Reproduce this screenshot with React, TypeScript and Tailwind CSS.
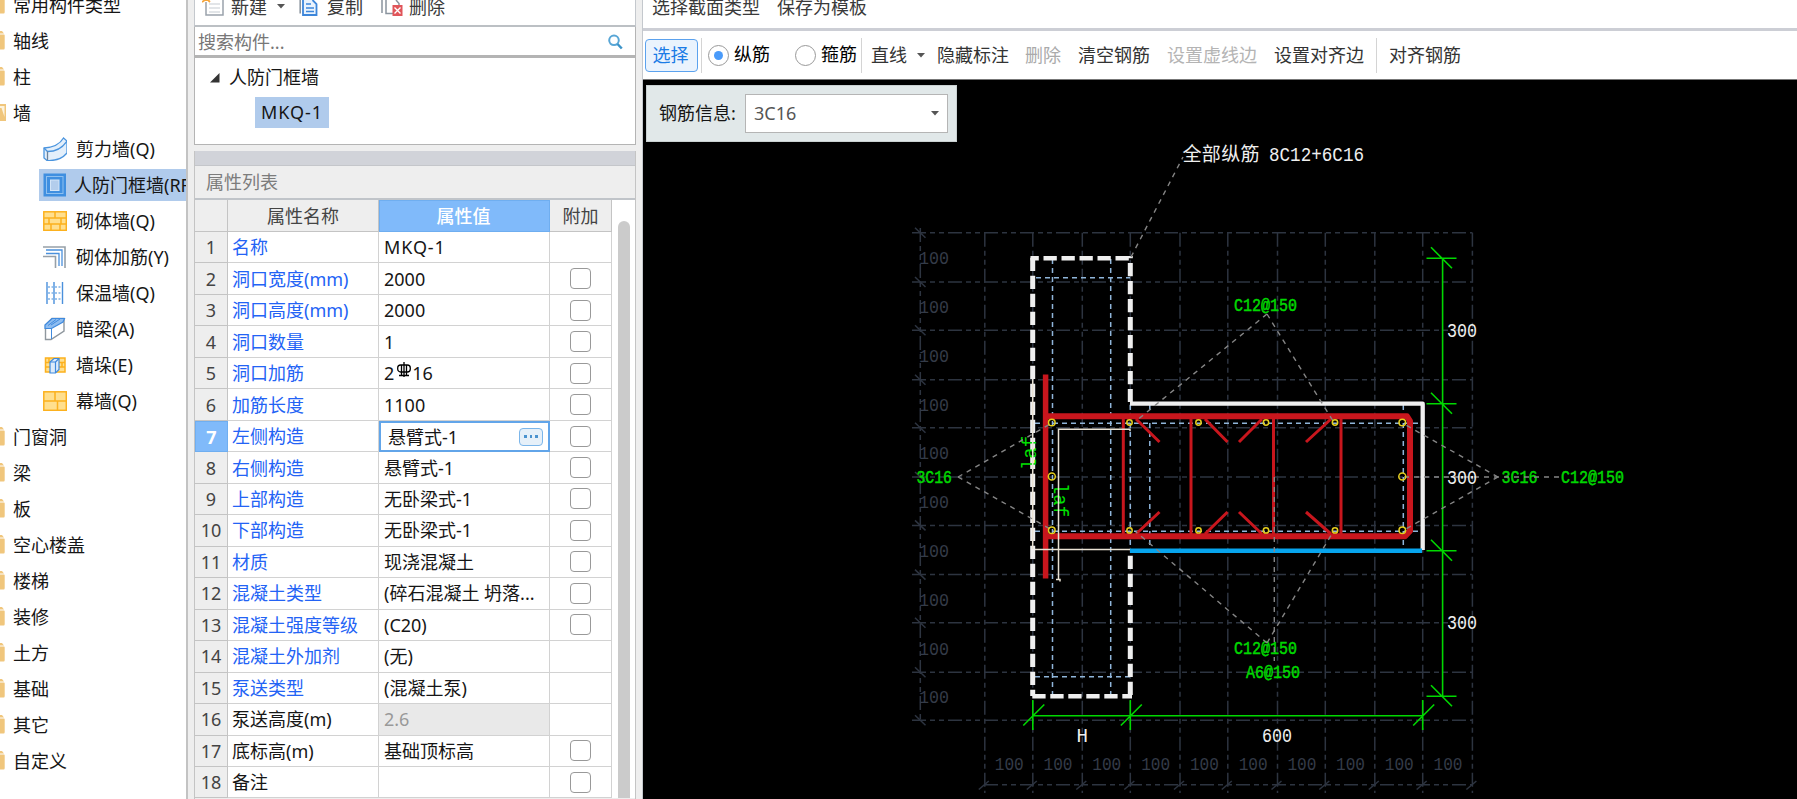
import React from "react";

const UI = "font-['Noto_Sans','Noto_Sans_CJK_SC',sans-serif]";

/* ---------- component tree ---------- */

function IconShear() {
  return (
    <svg width="24" height="24" viewBox="0 0 24 24" fill="none">
      <path d="M1 11C9 10.500 17 7 20.500 1L24 4V16C20 21 13 24 4 23.500L1 21Z" fill="#e3effb" stroke="#4a94de" strokeWidth="1.300" />
      <path d="M1 11L4.500 14.500C13 14.500 20 10 24 4" stroke="#4a94de" strokeWidth="1.300" />
      <path d="M4.500 14.500V23" stroke="#6c8299" strokeWidth="1.300" />
    </svg>
  );
}
function IconFrame() {
  return (
    <svg width="24" height="24" viewBox="0 0 24 24" fill="none">
      <rect x="0.500" y="0.500" width="22.500" height="23" fill="#3f8fe0" />
      <rect x="3.500" y="3.500" width="16.500" height="17" stroke="#8ec0f0" />
      <rect x="7.500" y="7" width="8.500" height="10.500" fill="#b3cdec" stroke="#d3e5f8" />
    </svg>
  );
}
function IconBrick() {
  return (
    <svg width="24" height="20" viewBox="0 0 24 20" fill="none">
      <rect x="0.800" y="0.800" width="22.500" height="18.500" fill="#ffdf8e" stroke="#fcb11e" strokeWidth="1.500" />
      <path d="M1 7H23M1 13H23M12 1V7M6 7V13M18 7V13M8 13V19M17 13V19" stroke="#fcb11e" strokeWidth="1.500" />
    </svg>
  );
}
function IconRebar() {
  return (
    <svg width="24" height="24" viewBox="0 0 24 24" fill="none">
      <path d="M0 2H22V23" stroke="#97a0a8" strokeWidth="1.600" />
      <path d="M0 11.500H12.500V23" stroke="#97a0a8" strokeWidth="1.600" />
      <path d="M3 5H19V21M3 8.500H16V21" stroke="#4a90dc" strokeWidth="1.300" />
    </svg>
  );
}
function IconInsulation() {
  return (
    <svg width="24" height="24" viewBox="0 0 24 24" fill="none">
      <path d="M4 1V23M11 1V23M19.500 1V23" stroke="#4a90dc" strokeWidth="1.400" />
      <path d="M5 6H19M5 12H19M5 18H19" stroke="#7fb2e8" strokeWidth="1.300" strokeDasharray="2 1.500" />
    </svg>
  );
}
function IconBeam() {
  return (
    <svg width="24" height="24" viewBox="0 0 24 24" fill="none">
      <path d="M2.500 8L9 1.500H21V14L8 22.500H2.500Z" fill="#fff" stroke="#8f979e" strokeWidth="1.400" />
      <path d="M2 8L9 1.500H21.500L20 5L8.500 11.500H2Z" fill="#8fbdf0" stroke="#3f8ade" strokeWidth="1.200" />
      <path d="M8.500 11.500V22M8 8L17 2M5 8.500L13 2.500" stroke="#3f8ade" />
    </svg>
  );
}
function IconPier() {
  return (
    <svg width="24" height="20" viewBox="0 0 24 20" fill="none">
      <rect x="2.500" y="3" width="19.500" height="14" fill="#ffdf8e" stroke="#fcb11e" strokeWidth="1.500" />
      <path d="M2 7.500H22M2 12H22M6 3V7.500M19 8V12" stroke="#fcb11e" strokeWidth="1.500" />
      <path d="M7 7L11 3.500H16V14.500L12.500 18H7Z" fill="#ddebf9" stroke="#3f8ade" strokeWidth="1.200" />
      <path d="M7 7H12.500V18M12.500 7L16 3.500" stroke="#3f8ade" strokeWidth="1.200" />
    </svg>
  );
}
function IconCurtain() {
  return (
    <svg width="24" height="20" viewBox="0 0 24 20" fill="none">
      <rect x="0.800" y="0.800" width="22.500" height="18.500" fill="#ffdf8e" stroke="#fcb11e" strokeWidth="1.500" />
      <path d="M1 10H23M12 1V10M14.500 10V19" stroke="#fcb11e" strokeWidth="1.500" />
    </svg>
  );
}

type TreeItem = { label: string; icon?: React.ReactNode; selected?: boolean; open?: boolean };
const TREE: TreeItem[] = [
  { label: "常用构件类型" },
  { label: "轴线" },
  { label: "柱" },
  { label: "墙", open: true },
  { label: "剪力墙(Q)", icon: <IconShear /> },
  { label: "人防门框墙(RF)", icon: <IconFrame />, selected: true },
  { label: "砌体墙(Q)", icon: <IconBrick /> },
  { label: "砌体加筋(Y)", icon: <IconRebar /> },
  { label: "保温墙(Q)", icon: <IconInsulation /> },
  { label: "暗梁(A)", icon: <IconBeam /> },
  { label: "墙垛(E)", icon: <IconPier /> },
  { label: "幕墙(Q)", icon: <IconCurtain /> },
  { label: "门窗洞" },
  { label: "梁" },
  { label: "板" },
  { label: "空心楼盖" },
  { label: "楼梯" },
  { label: "装修" },
  { label: "土方" },
  { label: "基础" },
  { label: "其它" },
  { label: "自定义" },
];

function Folder({ open }: { open?: boolean }) {
  return (
    <svg width="7" height="20" viewBox="0 0 7 20" className="shrink-0">
      {open ? (
        <>
          <path d="M0 1H6V18H0Z" fill="#f0c67c" />
          <path d="M0 3H4.500V14L1.500 5H0Z" fill="#fdf3dd" />
        </>
      ) : (
        <path d="M0 0H2L4 2.500H0ZM0 3.500H4Q4.700 3.500 4.700 4.500V17Q4.700 18.500 3.700 18.500H0Z" fill="#f0c67c" />
      )}
    </svg>
  );
}

function TreePane() {
  return (
    <aside className="h-full w-[188px] shrink-0 overflow-hidden border-r-2 border-[#c3c3c3] bg-white">
      <ul className="-mt-[13px] text-[18px] leading-[36px] whitespace-nowrap text-[#161616]">
        {TREE.map((t) =>
          t.icon ? (
            <li key={t.label} className="flex h-9 items-center pl-[39px]">
              <div className={t.selected ? "flex h-8 grow items-center bg-[#b0cbec] pl-1" : "flex h-8 grow items-center pl-1"}>
                <span className="flex w-6 shrink-0 justify-center">{t.icon}</span>
                <span className={t.selected ? "pl-[7px]" : "pl-[9px]"}>{t.label}</span>
              </div>
            </li>
          ) : (
            <li key={t.label} className="flex h-9 items-center">
              <Folder open={t.open} />
              <span className="pl-1.5">{t.label}</span>
            </li>
          )
        )}
      </ul>
    </aside>
  );
}

/* ---------- property panel ---------- */

type Prop = { name: string; value: React.ReactNode; check?: boolean; plain?: boolean; disabled?: boolean; active?: boolean };
const PROPS: Prop[] = [
  { name: "名称", value: <span className="tracking-[0.9px]">MKQ-1</span> },
  { name: "洞口宽度(mm)", value: "2000", check: true },
  { name: "洞口高度(mm)", value: "2000", check: true },
  { name: "洞口数量", value: "1", check: true },
  {
    name: "洞口加筋",
    value: (
      <span className="flex items-center">
        2
        <svg width="14" height="16" viewBox="0 0 14 16" className="mr-[1px] ml-[3px] -mt-1.5" fill="none" stroke="#000" strokeWidth="1.300">
          <rect x="0.700" y="3" width="12.600" height="7" rx="3" />
          <path d="M7 0V15M4.500 3V13M9.500 3V13M2 13.500H12" />
        </svg>
        16
      </span>
    ),
    check: true,
  },
  { name: "加筋长度", value: "1100", check: true },
  { name: "左侧构造", value: "悬臂式-1", check: true, active: true },
  { name: "右侧构造", value: "悬臂式-1", check: true },
  { name: "上部构造", value: "无卧梁式-1", check: true },
  { name: "下部构造", value: "无卧梁式-1", check: true },
  { name: "材质", value: "现浇混凝土", check: true },
  { name: "混凝土类型", value: "(碎石混凝土 坍落...", check: true },
  { name: "混凝土强度等级", value: "(C20)", check: true },
  { name: "混凝土外加剂", value: "(无)" },
  { name: "泵送类型", value: "(混凝土泵)" },
  { name: "泵送高度(m)", value: "2.6", plain: true, disabled: true },
  { name: "底标高(m)", value: "基础顶标高", check: true, plain: true },
  { name: "备注", value: "", check: true, plain: true },
];

const COLS = "grid grid-cols-[33px_151px_171px_62px]";

function PropertyTable() {
  return (
    <div className="flex h-[598px] overflow-hidden bg-white text-[18px] leading-[24px] whitespace-nowrap">
      <div className="w-[417px] shrink-0">
        <div className={`${COLS} h-[32px] text-[#444]`}>
          <div className="border-r border-b border-[#c4c4c4] bg-[#eee]" />
          <div className="flex items-center justify-center border-r border-b border-[#c4c4c4] bg-[#eee]">属性名称</div>
          <div className="flex items-center justify-center border border-[#6faef0] bg-[#80bafa] pr-0.5 font-medium text-white">属性值</div>
          <div className="flex items-center justify-center border-r border-b border-[#c4c4c4] bg-[#eee]">附加</div>
        </div>
        {PROPS.map((p, i) => (
          <div key={p.name} className={`${COLS} h-[31.48px]`}>
            <div
              className={
                p.active
                  ? "flex items-center justify-center border border-[#6faef0] bg-[#80bafa] font-bold text-white"
                  : "flex items-center justify-center border-r border-b border-[#c4c4c4] bg-[#eee] text-[#444]"
              }
            >
              {i + 1}
            </div>
            <div className={p.plain ? "flex items-center border-r border-b border-[#d2d2d2] pl-1 text-[#161616]" : "flex items-center border-r border-b border-[#d2d2d2] pl-1 text-[#2363f5]"}>
              {p.name}
            </div>
            {p.active ? (
              <div className="flex items-center justify-between border-2 border-[#62a5e9] pr-[5px] pl-[7px] text-[#161616]">
                {p.value}
                <span className="flex h-[18px] w-6 items-center justify-center gap-[3px] rounded border border-[#7cb6ea] bg-[#e6f0f9]">
                  <i className="size-[2.5px] bg-[#4b93cf]" />
                  <i className="size-[2.5px] bg-[#4b93cf]" />
                  <i className="size-[2.5px] bg-[#4b93cf]" />
                </span>
              </div>
            ) : (
              <div className={p.disabled ? "flex items-center border-r border-b border-[#d2d2d2] bg-[#e9e9e9] pl-[5px] text-[#999]" : "flex items-center border-r border-b border-[#d2d2d2] pl-[5px] text-[#161616]"}>
                {p.value}
              </div>
            )}
            <div className="flex items-center justify-center border-r border-b border-[#d2d2d2]">
              {p.check && <span className="size-[21px] rounded border-[1.5px] border-[#999] bg-white" />}
            </div>
          </div>
        ))}
      </div>
      <div className="grow bg-white pt-[21px] pl-[6px]">
        <div className="h-full w-3 rounded-t-full bg-[#cbcbcb]" />
      </div>
    </div>
  );
}

function MiddlePane() {
  return (
    <section className="flex h-full w-[454px] shrink-0 flex-col bg-[#eee] pr-[6px] pl-1.5">
      <div className="flex h-[27px] items-start overflow-hidden border-x border-b-2 border-x-[#c4c8cd] border-b-[#bcc0c4] bg-white text-[18px] leading-[26px] text-[#3a3a3a]">
        <svg width="24" height="16" viewBox="0 0 24 16" className="mt-0 ml-[7px]" fill="none">
          <path d="M4 2V15H21V0" stroke="#9aa3ac" strokeWidth="1.500" />
          <path d="M7 4H18M7 8H18M7 12H18" stroke="#d9dde1" strokeWidth="1.500" />
          <path d="M0 2L3 0H6L8 2" stroke="#f5a53c" strokeWidth="1.800" />
        </svg>
        <span className="-mt-[6px] ml-[5px]">新建</span>
        <svg width="8" height="5" viewBox="0 0 8 5" className="mt-[4px] ml-[10px]"><path d="M0 0H8L4 4.500Z" fill="#555" /></svg>
        <svg width="20" height="16" viewBox="0 0 20 16" className="ml-[14px]" fill="none">
          <path d="M1.200 0V13.500" stroke="#8a949e" strokeWidth="1.600" />
          <path d="M4 0V15H17.500V4L13.500 0" fill="#eaf3fd" stroke="#3d86da" strokeWidth="1.800" />
          <path d="M7 4H12M7 8H15M7 11.500H15" stroke="#3d86da" strokeWidth="1.300" />
        </svg>
        <span className="-mt-[6px] ml-[8px]">复制</span>
        <svg width="22" height="16" viewBox="0 0 22 16" className="ml-[18px]" fill="none">
          <path d="M1 0V13M5 0V13.500H12M15 0L18 3.500V5" stroke="#8a949e" strokeWidth="1.500" />
          <rect x="11.500" y="5" width="10" height="11" fill="#e0555a" />
          <path d="M13.500 7.500L19.500 13.500M19.500 7.500L13.500 13.500" stroke="#fff" strokeWidth="1.400" />
        </svg>
        <span className="-mt-[6px] ml-[6px]">删除</span>
      </div>
      <div className="flex h-[31px] items-center justify-between border-x border-b-[3px] border-[#b4b4b4] bg-white pr-[12px] pl-[3px] text-[18px] leading-[26px] text-[#777]">
        <span className="pt-px">搜索构件...</span>
        <svg width="15" height="16" viewBox="0 0 15 16" fill="none" className="mt-0.5">
          <circle cx="6" cy="6.300" r="4.800" stroke="#58a6d6" strokeWidth="2" />
          <path d="M9.500 10L13.800 14.500" stroke="#3b93c8" strokeWidth="2.500" />
        </svg>
      </div>
      <div className="h-[87px] border border-t-0 border-[#b4b4b4] bg-white pt-px text-[18px] text-[#161616]">
        <div className="flex h-9 items-center">
          <svg width="10" height="10" viewBox="0 0 10 10" className="mt-0.5 ml-[15px]"><path d="M9.500 0V9.500H0Z" fill="#333" /></svg>
          <span className="ml-[9px]">人防门框墙</span>
        </div>
        <div className="mt-[2px] ml-[60px] flex h-[31px] w-[74px] items-center justify-center bg-[#b0cbec] tracking-[0.9px]">MKQ-1</div>
      </div>
      <div className="h-1.5 shrink-0" />
      <div className="flex grow flex-col border-x border-[#c4c4c4]">
        <div className="h-[15px] shrink-0 border-b border-[#c4c6ca] bg-[#d1d3d9]" />
        <div className="flex h-[34px] shrink-0 items-center border-b-2 border-[#c0c4c9] pl-[11px] text-[18px] text-[#7c7c7c]">属性列表</div>
        <PropertyTable />
      </div>
    </section>
  );
}

/* ---------- section drawing ---------- */

const GX = [984.8, 1032.8, 1082.3, 1130.3, 1180, 1227.8, 1277.5, 1325.3, 1374.8, 1422.7, 1472.4];
const GY = [232.7, 282, 330.2, 379.7, 427.7, 477, 525.4, 574.6, 622.8, 672.3, 720.3];
const BAR_X = [1129.5, 1198.5, 1266, 1335];
const TIES = [1123.3, 1191, 1273.5, 1341];
const HOOKS = [
  [1136, 1159.5],
  [1205, 1227.5],
  [1262, 1239],
  [1331, 1306],
];
const LEADERS = [
  "M1131 257L1183 157",
  "M1267 314L1136 421",
  "M1267 314L1333 421",
  "M958 477L1052 423",
  "M958 477L1052 530",
  "M1498 477L1404 424",
  "M1498 477L1404 530",
  "M1404 477H1559",
  "M1267 643L1136 532",
  "M1267 643L1333 532",
  "M1274.300 477V661",
];

type LabelProps = { x: number; y: number; w: number; fill: string; children: string; size?: number; weight?: number };
function Label({ x, y, w, fill, children, size = 19, weight = 0 }: LabelProps) {
  return (
    <text x={x} y={y} textLength={w} lengthAdjust="spacingAndGlyphs" fill={fill} stroke={fill} strokeWidth={weight} fontSize={size} fontFamily="'Liberation Mono', monospace">
      {children}
    </text>
  );
}

function Drawing() {
  return (
    <svg className="block" width="1155" height="719" viewBox="643 80 1155 719" fill="none">
      <g stroke="#2d3440" strokeWidth="1.500" strokeDasharray="14 4 5 4 5 4">
        {GX.map((x) => <path key={x} d={`M${x} 232.700V793`} />)}
        {GY.map((y) => <path key={y} d={`M912 ${y}H1472.400`} />)}
        <path d="M920.300 228V720" />
        <path d="M984 784.700H1473" />
      </g>
      <g stroke="#2d3440" strokeWidth="1.500">
        {GY.map((y) => <path key={y} d={`M915 ${y - 5}L925.500 ${y + 5}`} />)}
        {GX.map((x) => <path key={x} d={`M${x - 6} 789.500L${x + 4} 781`} />)}
      </g>
      {GY.slice(1).map((y, i) => (
        <Label key={y} x={919} y={(y + GY[i]) / 2 + 7} w={30} fill="#343b48">100</Label>
      ))}
      {GX.slice(1).map((x, i) => (
        <Label key={x} x={(x + GX[i]) / 2 - 14} y={770} w={29} fill="#343b48">100</Label>
      ))}

      <g stroke="#8fb5da" strokeWidth="1.500" strokeDasharray="5 4">
        <path d="M1052.500 259V694M1110.700 259V694M1130.300 405V549M1149.800 405V549M1403.300 405V549" />
        <path d="M1036 277.700H1130M1035 423.200H1421M1035 531.200H1421M1035 676.700H1130" />
      </g>

      <g stroke="#c8161d">
        <path d="M1045.600 374.500V578.500" strokeWidth="5.500" />
        <path d="M1043 416.300H1407L1410 421V531L1405 536.300H1043" strokeWidth="6" strokeLinejoin="round" />
        {TIES.map((x) => <path key={x} d={`M${x} 417V536`} strokeWidth="3" />)}
        {HOOKS.map(([a, b]) => (
          <path key={a} d={`M${a} 419L${b} 442M${a} 534L${b} 512`} strokeWidth="3" />
        ))}
      </g>

      <g stroke="#efefef" strokeWidth="5">
        <path d="M1032.700 257.700V696" strokeDasharray="13.300 4.700" />
        <path d="M1130.300 256V402" strokeDasharray="13.300 4.700" strokeDashoffset="11" />
        <path d="M1130.300 551V696" strokeDasharray="13.300 4.700" strokeDashoffset="13.300" />
        <path d="M1030.500 258.200H1130.500" strokeDasharray="13.300 4.700" strokeDashoffset="5" strokeWidth="4.500" />
        <path d="M1032.300 696.300H1132" strokeDasharray="13.300 4.700" strokeWidth="4.500" />
        <path d="M1130 403.700H1422.700V550" strokeWidth="4.300" strokeLinejoin="round" />
      </g>
      <path d="M1130 550.800H1422" stroke="#07a5ee" strokeWidth="4.500" />

      <g fill="#00e000" fontFamily="'Liberation Mono', monospace" fontSize="21">
        <text transform="translate(1036 470) rotate(-90)" textLength="34" lengthAdjust="spacingAndGlyphs">laf</text>
        <text transform="translate(1053.500 483) rotate(90)" textLength="34" lengthAdjust="spacingAndGlyphs">laf</text>
      </g>
      <g stroke="#e9e2d4" strokeWidth="1.500">
        <path d="M1130 431V429.300H1058.500V579.500M1056 579.500H1060V581.500" />
        <path d="M1035 549.500H1130M1032.700 379V549" />
      </g>

      <g>
        <Label x={1234} y={311} w={63} weight={0.5} size={17.5} fill="#00d800">C12@150</Label>
        <Label x={916.500} y={482.500} w={35.500} weight={0.5} size={17.5} fill="#00d800">3C16</Label>
        <Label x={1501.500} y={482.500} w={36} weight={0.5} size={17.5} fill="#00d800">3C16</Label>
        <Label x={1561} y={482.500} w={63} weight={0.5} size={17.5} fill="#00d800">C12@150</Label>
        <Label x={1234} y={653.500} w={63} weight={0.5} size={17.5} fill="#00d800">C12@150</Label>
        <Label x={1246} y={677.500} w={54} weight={0.5} size={17.5} fill="#00d800">A6@150</Label>
      </g>

      <g stroke="#00d800" strokeWidth="1.600">
        <path d="M1442.600 258V696" />
        {[258.3, 403.7, 550.8, 696.3].map((y) => (
          <path key={y} d={`M1426.500 ${y}H1456.500M1431 ${y - 11}L1452 ${y + 10}`} />
        ))}
        <path d="M1033 715.800H1423" />
        {[1032.8, 1130.3, 1422.7].map((x) => (
          <path key={x} d={`M${x} 700V730M${x - 9.5} 725.500L${x + 11.5} 704.500`} />
        ))}
      </g>

      <g stroke="#858585" strokeWidth="1.400" strokeDasharray="5 5">
        {LEADERS.map((d) => <path key={d} d={d} />)}
      </g>
      <g stroke="#e6cf1e" strokeWidth="1.500">
        {BAR_X.map((x) => (
          <React.Fragment key={x}>
            <circle cx={x} cy={422.500} r="2.700" />
            <circle cx={x} cy={530.400} r="2.700" />
          </React.Fragment>
        ))}
        {[1051.8, 1402.3].map((x) => (
          <React.Fragment key={x}>
            <circle cx={x} cy={422.500} r="3.300" />
            <circle cx={x} cy={476.500} r="3.500" />
            <circle cx={x} cy={530.200} r="3.300" />
          </React.Fragment>
        ))}
      </g>

      <Label x={1447} y={336.500} w={30} fill="#efefef" size={20}>300</Label>
      <Label x={1447} y={483.500} w={30} fill="#efefef" size={20}>300</Label>
      <Label x={1447} y={629} w={30} fill="#efefef" size={20}>300</Label>
      <Label x={1262} y={742} w={30} fill="#efefef" size={20}>600</Label>
      <Label x={1076.500} y={742} w={11.500} fill="#efefef" size={20}>H</Label>
      <text x="1182.500" y="161" fill="#efefef" fontSize="19" textLength="77" fontFamily="'Noto Sans CJK SC', sans-serif">全部纵筋</text>
      <Label x={1269} y={161} w={95} fill="#efefef" size={20}>8C12+6C16</Label>
    </svg>
  );
}

/* ---------- editor ---------- */

function Divider() {
  return <span className="h-[35px] w-px shrink-0 bg-[#d4d4d4]" />;
}

function EditorPane() {
  return (
    <main className="flex h-full min-w-0 grow flex-col border-l border-[#c4c8cd] bg-white">
      <div className="flex h-[31px] shrink-0 items-start overflow-hidden border-b-[3px] border-[#ccced5] pl-[9px] text-[18px] leading-[26px] text-[#3a3a3a]">
        <span className="-mt-[6px] w-[125px]">选择截面类型</span>
        <span className="-mt-[6px]">保存为模板</span>
      </div>
      <div className="flex h-[49px] shrink-0 items-center border-b border-[#777] text-[18px] leading-[26px] whitespace-nowrap text-[#333]">
        <span className="ml-[2px] flex h-[33px] w-[53px] items-center justify-center rounded border-[1.5px] border-[#5ba2ee] bg-[#eaf3fd] pr-0.5 text-[#1b7ce6]">选择</span>
        <span className="ml-[3px]" />
        <Divider />
        <span className="ml-[6px] flex size-[21px] items-center justify-center rounded-full border-[1.5px] border-[#999]">
          <i className="size-[9px] rounded-full bg-[#4a9bfa]" />
        </span>
        <span className="mb-0.5 ml-[5px] text-black">纵筋</span>
        <span className="ml-[25px] size-[21px] rounded-full border-[1.5px] border-[#999]" />
        <span className="mb-0.5 ml-[5px] text-black">箍筋</span>
        <span className="ml-[4px]" />
        <Divider />
        <span className="ml-[9px]">直线</span>
        <svg width="8" height="5" viewBox="0 0 8 5" className="ml-[10px]"><path d="M0 0H8L4 4.500Z" fill="#555" /></svg>
        <span className="ml-[12px]">隐藏标注</span>
        <span className="ml-[16px] text-[#aaa]">删除</span>
        <span className="ml-[17px]">清空钢筋</span>
        <span className="ml-[17px] text-[#b4b4b4]">设置虚线边</span>
        <span className="ml-[17px]">设置对齐边</span>
        <span className="ml-[12px]" />
        <Divider />
        <span className="ml-[12px]">对齐钢筋</span>
      </div>
      <div className="relative h-[719px] overflow-hidden bg-black">
        <Drawing />
        <div className="absolute top-[5px] left-[3px] flex h-[57px] w-[311px] items-center border border-[#c9d0d1] bg-[#e1e8e9] text-[18px] text-[#161616]">
          <span className="ml-[12px] w-[86px] whitespace-nowrap">钢筋信息:</span>
          <div className="flex h-[39px] w-[203px] items-center justify-between border-[1.5px] border-[#b5b5b5] bg-white pr-[8px] pl-2 text-[#555]">
            <span>3C16</span>
            <svg width="8" height="5" viewBox="0 0 8 5"><path d="M0 0H8L4 4.500Z" fill="#555" /></svg>
          </div>
        </div>
      </div>
    </main>
  );
}

export default function App() {
  return (
    <div className={`flex h-[799px] w-[1797px] overflow-hidden bg-[#eee] ${UI}`}>
      <TreePane />
      <MiddlePane />
      <EditorPane />
    </div>
  );
}
